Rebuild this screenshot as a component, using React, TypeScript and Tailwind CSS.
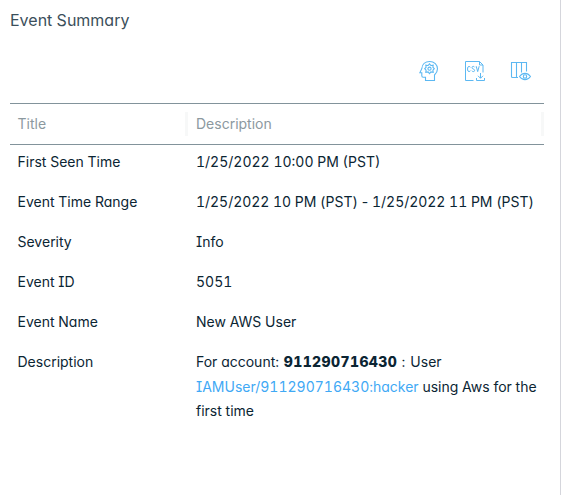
import type { ReactNode } from "react";

const rows: { title: string; value: ReactNode }[] = [
  { title: "First Seen Time", value: "1/25/2022 10:00 PM (PST)" },
  {
    title: "Event Time Range",
    value: (
      <span className="tracking-[-0.035px]">
        1/25/2022 10 PM (PST)
        <span className="[font-feature-settings:'cv11','cv08']">{" - "}</span>
        1/25/2022 11 PM (PST)
      </span>
    ),
  },
  { title: "Severity", value: "Info" },
  { title: "Event ID", value: "5051" },
  { title: "Event Name", value: "New AWS User" },
];

function HeadGearIcon() {
  return (
    <svg width="20" height="22" viewBox="0 0 20 22" fill="none" stroke="#5cb8f2" strokeWidth="1.100">
      <path d="M6.500 20.500v-3.300H4.200c-.9 0-1.400-.6-1.400-1.400v-3H.8l2-4.100C3 4.300 6.300 1.500 10.700 1.500c4.500 0 7.800 3.200 7.800 7.300 0 3-1.500 4.800-3 6.200v5.500z" />
      <path d="M10.500 3.800l1.400 1.700 2.300-.4-.3 2.100 1.400 1.500-1.400 1.500.3 2.100-2.300-.4-1.400 1.700-1.400-1.700-2.300.4.3-2.100-1.400-1.500 1.400-1.500-.3-2.100 2.300.4z" />
      <circle cx="10.500" cy="8.700" r="1.600" />
    </svg>
  );
}

function CsvIcon() {
  return (
    <svg width="21" height="22" viewBox="0 0 21 22" fill="none" stroke="#5cb8f2" strokeWidth="1">
      <path d="M9.500 20.500H1.500v-19h14l3.500 3.500v7.500M15.500 1.500v3.500H19" />
      <path d="M16.500 13v5M14 15.800l2.500 2.500 2.500-2.500M12.500 18v2.500h8V18" />
      <path d="M6.300 7.400Q6 6.400 5 6.400 3.500 6.400 3.500 9t1.500 2.600q1 0 1.300-1M10.600 7.300Q10.200 6.400 9.300 6.400 8 6.400 8 7.600q0 1 1.300 1.400t1.300 1.400q0 1.200-1.300 1.200-1 0-1.400-.9M12.200 6.200l1.500 5.400 1.500-5.400" />
    </svg>
  );
}

function ColumnsEyeIcon() {
  return (
    <svg width="21" height="22" viewBox="0 0 21 22" fill="none" stroke="#5cb8f2" strokeWidth="1.100">
      <path d="M8 17.500H2.500q-1 0-1-1v-14h15v9M6.500 2.500v15M11.500 2.500v10" />
      <path d="M9.500 16.500c3-4.200 8-4.200 11 0-3 4.200-8 4.200-11 0z" />
      <circle cx="15" cy="16.500" r="1.700" />
    </svg>
  );
}

export default function App() {
  return (
    <div className="h-[495px] w-[561px] border-r border-[#d5d6dc] bg-white pl-2.5 pr-4 font-['Inter','Liberation_Sans',sans-serif] text-sm text-[#0b2533] [font-feature-settings:'cv11','cv08','tnum']">
      <h1 className="h-10 pt-2 text-base leading-6 text-[#3b4f5b]">Event Summary</h1>
      <div className="flex h-[63px] justify-end gap-[25px] pr-[13px] pt-5">
        <HeadGearIcon />
        <CsvIcon />
        <ColumnsEyeIcon />
      </div>
      <div className="flex h-[42px] items-center border-y border-[#82939b] text-[#8c999f]">
        <div className="h-6 w-[178px] border-r-[3px] border-[#f7f8f8] pl-[7.500px] leading-6">Title</div>
        <div className="h-6 flex-1 border-r-[3px] border-[#f7f8f8] pl-2 leading-6">Description</div>
      </div>
      <div className="-mt-[3px]">
        {rows.map((row) => (
          <div key={row.title} className="flex h-10 items-center">
            <div className="w-[178px] pl-[7.500px]">{row.title}</div>
            <div className="flex-1 whitespace-nowrap pl-2">{row.value}</div>
          </div>
        ))}
        <div className="flex pt-2 leading-[24.500px]">
          <div className="w-[178px] pl-[7.500px]">Description</div>
          <div className="flex-1 whitespace-nowrap pl-2">
            <div>
              For account: <b className="ml-px font-extrabold tracking-[0.420px]">911290716430</b>
              <span className="tracking-[0.600px]"> : </span>User
            </div>
            <div>
              <a className="text-[#3fa9f5]">IAMUser/911290716430:hacker</a> using Aws for the
            </div>
            <div>first time</div>
          </div>
        </div>
      </div>
    </div>
  );
}
